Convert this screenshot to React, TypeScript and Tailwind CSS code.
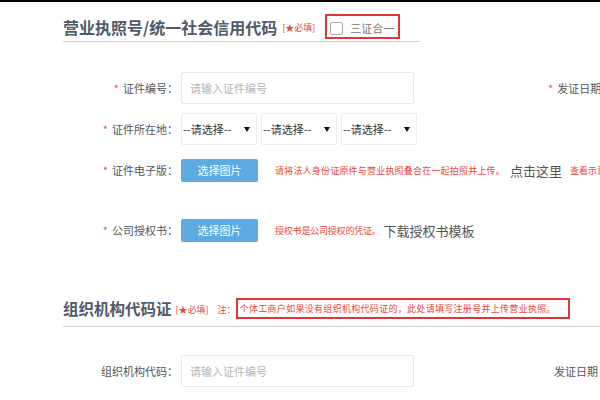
const font = "font-['Noto_Sans_CJK_SC','Noto_Sans',sans-serif]"

function FieldLabel({ text, required = true }: { text: string; required?: boolean }) {
  return (
    <div className="w-[178px] shrink-0 text-right text-[11px] leading-none text-[#555]">
      {required && <span className="text-[#e8555a] mr-[4px]">*</span>}
      {text}：
    </div>
  )
}

function TextInput() {
  return (
    <div className="w-[233px] h-[32px] shrink-0 border border-[#e8e8e8] rounded-[2px] flex items-center pl-[8px] text-[11px] text-[#b5b5b5]">
      请输入证件编号
    </div>
  )
}

function SelectBox() {
  return (
    <div className="w-[76px] h-[32px] shrink-0 border border-[#ececec] rounded-[2px] flex items-center justify-between pl-[1px] pr-[6px] text-[11px] text-[#333]">
      <span>--请选择--</span>
      <svg width="6" height="5" viewBox="0 0 6 5">
        <path d="M0 0h6L3 5z" fill="#111" />
      </svg>
    </div>
  )
}

function PickButton() {
  return (
    <div className="w-[77px] h-[23px] shrink-0 bg-[#5baae1] rounded-[2px] flex items-center justify-center text-[11px] text-white">
      选择图片
    </div>
  )
}

function Required({ className = "" }: { className?: string }) {
  return <span className={`text-[9px] text-[#e8473c] whitespace-nowrap ${className}`}>[★必填]</span>
}

export default function App() {
  return (
    <div className={`${font} w-[600px] h-[400px] overflow-hidden bg-white border-t-2 border-black`}>
      {/* 营业执照 */}
      <div className="ml-[63px] w-[357px] border-b border-[#cfcfcf] flex items-center pt-[12px] pb-[2px]">
        <span className="text-[16px] font-bold text-[#4f5a6a] whitespace-nowrap leading-none">营业执照号/统一社会信用代码</span>
        <Required className="ml-[5px] mt-[2px]" />
        <div className="ml-[10px] w-[75px] h-[25px] border-2 border-[#e0363a] flex items-center pl-[3px]">
          <span className="w-[13px] h-[13px] mt-[4px] border border-[#a9a9a9] rounded-[2px] bg-white shrink-0" />
          <span className="ml-[7px] mt-[3px] text-[11px] leading-none text-[#777] whitespace-nowrap">三证合一</span>
        </div>
      </div>

      <div className="mt-[30px] flex items-center gap-[3px] whitespace-nowrap">
        <FieldLabel text="证件编号" />
        <TextInput />
        <div className="ml-[131px] text-[11px] text-[#555]">
          <span className="text-[#e8555a] mr-[4px]">*</span>发证日期
        </div>
      </div>

      <div className="mt-[9px] flex items-center gap-[3px]">
        <FieldLabel text="证件所在地" />
        <div className="flex gap-[4px]">
          <SelectBox />
          <SelectBox />
          <SelectBox />
        </div>
      </div>

      <div className="mt-[14px] flex items-center gap-[3px] whitespace-nowrap">
        <FieldLabel text="证件电子版" />
        <PickButton />
        <span className="ml-[14px] text-[9px] tracking-[0.2px] text-[#e8473c]">请将法人身份证原件与营业执照叠合在一起拍照并上传。</span>
        <span className="ml-[2px] text-[13px] text-[#555]">点击这里</span>
        <span className="ml-[5px] text-[9px] text-[#e8473c]">查看示意</span>
      </div>

      <div className="mt-[37px] flex items-center gap-[3px] whitespace-nowrap">
        <FieldLabel text="公司授权书" />
        <PickButton />
        <span className="ml-[14px] text-[9px] tracking-[-0.2px] text-[#e8473c]">授权书是公司授权的凭证。</span>
        <span className="text-[13px] text-[#555]">下载授权书模板</span>
      </div>

      {/* 组织机构代码证 */}
      <div className="mt-[56px] ml-[63px] border-b border-[#cfcfcf] flex items-center pb-[7px] whitespace-nowrap">
        <span className="text-[15.5px] font-bold text-[#4f5a6a] leading-none">组织机构代码证</span>
        <Required className="ml-[4px] mt-[2px]" />
        <span className="ml-[9px] mt-[2px] text-[9px] text-[#e8473c]">注：</span>
        <div className="ml-[0px] w-[334px] h-[21px] border-2 border-[#e0363a] flex items-center pl-[2px]">
          <span className="text-[9px] tracking-[0.3px] text-[#e8473c]">个体工商户如果没有组织机构代码证的，此处请填写注册号并上传营业执照。</span>
        </div>
      </div>

      <div className="mt-[28px] flex items-center gap-[3px] whitespace-nowrap">
        <FieldLabel text="组织机构代码" required={false} />
        <TextInput />
        <div className="ml-[137px] text-[11px] text-[#555]">发证日期</div>
      </div>
    </div>
  )
}
